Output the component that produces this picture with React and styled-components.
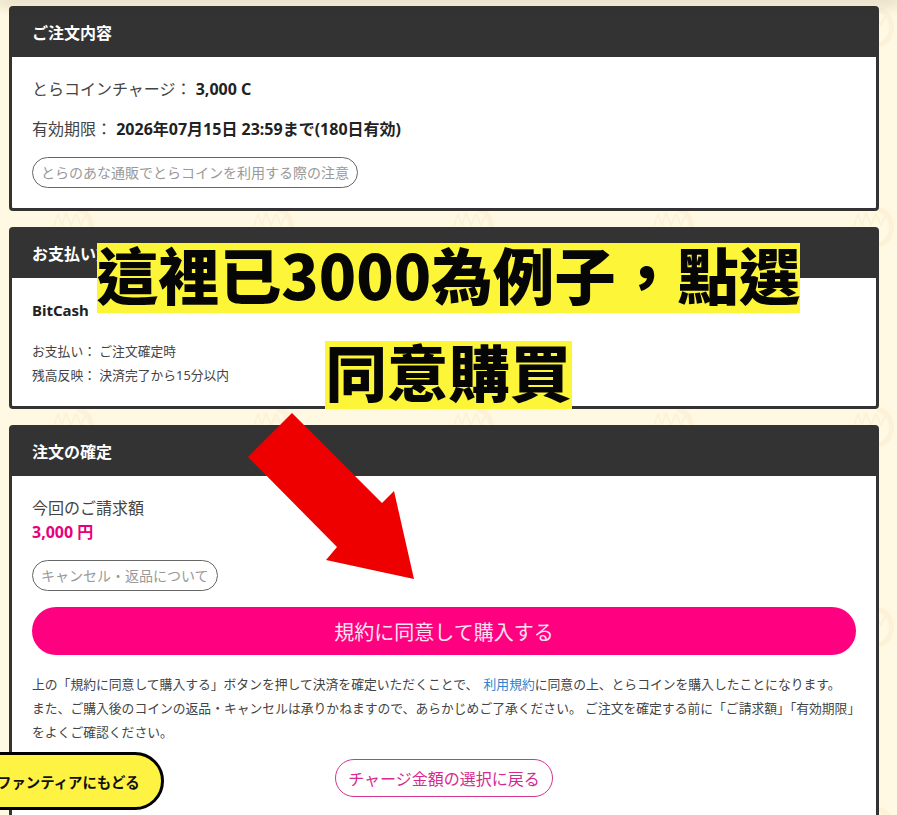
import React from "react";
import styled, { createGlobalStyle } from "styled-components";

const tile = encodeURIComponent(`<svg xmlns="http://www.w3.org/2000/svg" width="200" height="200" viewBox="0 0 200 200"><g fill="none" stroke="#fdf2d8" stroke-linecap="round" stroke-linejoin="round"><path d="M54 25 L58 14 L62 25 L66 13 L71 25 L76 14 L81 25 L86 15 L91 25" stroke-width="2"/><path d="M80 10 C94 14 96 36 82 44" stroke-width="5"/><path d="M56 44 C62 47 74 47 82 44" stroke-width="4"/></g></svg>`);

const Global = createGlobalStyle`
  html, body { margin: 0; padding: 0; height: 815px; overflow: hidden; }
  body {
    background-color: #fff8e2;
    background-image: url("data:image/svg+xml,${tile}");
    background-repeat: repeat;
    font-family: "Noto Sans", "Noto Sans CJK JP", sans-serif;
    color: #444;
  }
`;

const Page = styled.div`
  position: relative;
  width: 897px;
  height: 815px;
  overflow: hidden;
`;

const Shade = styled.div`
  position: absolute;
  top: 0;
  left: 0;
  right: 0;
  height: 0;
  box-shadow: 0 0 14px 3px rgba(60, 50, 10, 0.28);
`;

const Column = styled.main`
  display: flex;
  flex-direction: column;
  gap: 16px;
  width: 870px;
  padding: 6px 0 0 9px;
`;

const Card = styled.section`
  border: 3px solid #333;
  border-radius: 4px;
  background: #fff;
`;

const CardHead = styled.h2`
  margin: 0;
  height: 48px;
  padding: 0 20px;
  display: flex;
  align-items: center;
  background: #333;
  color: #fff;
  font-size: 16px;
  font-weight: 700;
  line-height: 24px;
`;

const CardBody = styled.div`
  padding: 20px 20px ${(p) => p.$bottom ?? 20}px;
`;

const Line = styled.p`
  margin: 0 0 ${(p) => p.$gap ?? 16}px;
  font-size: ${(p) => p.$size ?? 16}px;
  line-height: 24px;
  color: #444;
`;

const Strong = styled.strong`
  font-weight: 700;
  font-size: ${(p) => (p.$size ? `${p.$size}px` : "inherit")};
  color: #222;
`;

const Price = styled.p`
  margin: 0 0 16px;
  font-size: 16px;
  font-weight: 700;
  line-height: 24px;
  color: #e6007e;
`;

const Pill = styled.a`
  display: inline-flex;
  align-items: center;
  height: 31px;
  box-sizing: border-box;
  padding: 0 8px;
  border: 1px solid #666;
  border-radius: 16px;
  color: #999;
  font-size: 14px;
  line-height: 1;
`;

const Buy = styled.button`
  display: block;
  width: 100%;
  height: 48px;
  margin-top: 16px;
  padding: 0;
  border: 0;
  border-radius: 24px;
  background: #ff0080;
  color: #ffe3f0;
  font-family: inherit;
  font-size: 20px;
`;

const Notice = styled.p`
  margin: 17px 0 15px;
  font-size: 12.8px;
  line-height: 24px;
  color: #444;
  white-space: nowrap;
`;

const TermsLink = styled.a`
  margin-left: 2px;
  color: #2b83cf;
`;

const BackRow = styled.div`
  display: flex;
  justify-content: center;
`;

const Back = styled.a`
  display: inline-flex;
  align-items: center;
  height: 38px;
  box-sizing: border-box;
  padding: 0 12px;
  border: 1px solid #d4348f;
  border-radius: 19px;
  color: #d62a8e;
  font-size: 16px;
`;

const Floating = styled.a`
  position: absolute;
  left: -30px;
  top: 752px;
  display: flex;
  align-items: center;
  box-sizing: border-box;
  height: 58px;
  width: 194px;
  padding-left: 24px;
  border: 3px solid #000;
  border-radius: 29px;
  background: #fef243;
  color: #111;
  font-size: 14.4px;
  font-weight: 700;
  white-space: nowrap;
`;

const Captions = styled.div`
  position: absolute;
  top: 243px;
  left: 0;
  width: 897px;
  display: flex;
  flex-direction: column;
  align-items: center;
  gap: 28px;
`;

const Caption = styled.div`
  height: ${(p) => p.$h}px;
  line-height: ${(p) => p.$h - 8}px;
  background: #fcf538;
  color: #060606;
  font-family: "Noto Sans CJK TC", "Noto Sans", sans-serif;
  font-size: 61.5px;
  font-weight: 900;
  white-space: nowrap;
`;

const Arrow = styled.svg`
  position: absolute;
  left: 0;
  top: 0;
  pointer-events: none;
`;

export default function App() {
  return (
    <Page>
      <Global />
      <Column>
        <Card>
          <CardHead>ご注文内容</CardHead>
          <CardBody>
            <Line>とらコインチャージ： <Strong>3,000 C</Strong></Line>
            <Line>有効期限： <Strong>2026年07月15日 23:59まで(180日有効)</Strong></Line>
            <Pill>とらのあな通販でとらコインを利用する際の注意</Pill>
          </CardBody>
        </Card>
        <Card>
          <CardHead>お支払い方法</CardHead>
          <CardBody $bottom={19}>
            <Line $gap={17}><Strong $size={15}>BitCash</Strong></Line>
            <Line $gap={0} $size={12.8}>お支払い： ご注文確定時</Line>
            <Line $gap={0} $size={12.8}>残高反映： 決済完了から15分以内</Line>
          </CardBody>
        </Card>
        <Card>
          <CardHead>注文の確定</CardHead>
          <CardBody>
            <Line $gap={0}>今回のご請求額</Line>
            <Price>3,000 円</Price>
            <Pill>キャンセル・返品について</Pill>
            <Buy>規約に同意して購入する</Buy>
            <Notice>
              上の「規約に同意して購入する」ボタンを押して決済を確定いただくことで、 <TermsLink>利用規約</TermsLink>に同意の上、とらコインを購入したことになります。<br />
              また、ご購入後のコインの返品・キャンセルは承りかねますので、あらかじめご了承ください。 ご注文を確定する前に「ご請求額」「有効期限」<br />
              をよくご確認ください。
            </Notice>
            <BackRow>
              <Back>チャージ金額の選択に戻る</Back>
            </BackRow>
          </CardBody>
        </Card>
      </Column>
      <Shade />
      <Captions>
        <Caption $h={70}>這裡已3000為例子，點選</Caption>
        <Caption $h={68}>同意購買</Caption>
      </Captions>
      <Arrow width="897" height="815" viewBox="0 0 897 815">
        <polygon points="292,413 248,457 337,547 326,560 414,579 394,491 382,503" fill="#ee0000" />
      </Arrow>
      <Floating>ファンティアにもどる</Floating>
    </Page>
  );
}
